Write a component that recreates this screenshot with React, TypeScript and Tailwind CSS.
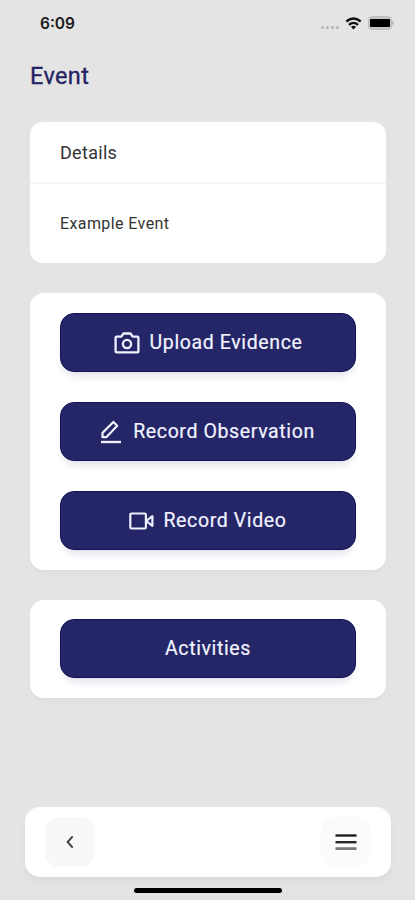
import React from "react";

function CameraIcon() {
  return (
    <svg width="26" height="22" viewBox="0 0 26 22" fill="none" stroke="#eef0ff" strokeWidth="2.3" strokeLinejoin="round">
      <path d="M2.6 4.6H7.3L9.5 1.5H16.5L18.7 4.6H23.4Q24.4 4.6 24.4 5.6V19.4Q24.4 20.4 23.4 20.4H2.6Q1.6 20.4 1.6 19.4V5.6Q1.6 4.6 2.6 4.6Z" />
      <circle cx="13" cy="12" r="4.1" />
    </svg>
  );
}

function EditIcon() {
  return (
    <svg width="20" height="24" viewBox="0 0 20 24" fill="none" stroke="#eef0ff" strokeWidth="2.2">
      <path d="M1.5 17.2V12.9L12.4 2L16.2 5.8L5.3 17.2Z" strokeLinejoin="round" />
      <path d="M0 22H20" strokeWidth="2.4" />
    </svg>
  );
}

function VideoIcon() {
  return (
    <svg width="25" height="18" viewBox="0 0 25 18" fill="none" stroke="#eef0ff" strokeWidth="2.2" strokeLinejoin="round">
      <rect x="1.3" y="1.5" width="15.6" height="15" rx="1.2" />
      <path d="M17.2 9L23.4 4.2V13.8Z" />
    </svg>
  );
}

function ActionButton({ icon, label, gap = "gap-[10px]" }: { icon?: React.ReactNode; label: string; gap?: string }) {
  return (
    <button className={`flex h-[59px] w-[296px] shrink-0 items-center justify-center rounded-[14px] border border-[#15115a] bg-[#242667] text-[19.5px] leading-none text-[#f2f3ff] shadow-[0_7px_9px_-4px_rgba(36,38,103,0.16)] ${gap}`}>
      {icon}
      <span className="whitespace-nowrap pt-px tracking-[0.62px] [-webkit-text-stroke:0.2px_#f2f3ff]">{label}</span>
    </button>
  );
}

export default function App() {
  return (
    <main className="flex h-[900px] w-[415px] flex-col overflow-hidden bg-[#e4e4e4] font-['Roboto',sans-serif]">
      <header className="flex h-[46px] shrink-0 items-center justify-between pr-[20px] pl-[40px]">
        <span className="pt-[1px] font-['Inter',sans-serif] text-[15.5px] font-semibold text-[#1b1b1b]">6:09</span>
        <div className="flex items-center">
          <div className="mt-[8px] mr-[6px] flex gap-[2px]">
            {[0, 1, 2, 3].map((n) => (
              <i key={n} className="h-[3px] w-[3px] rounded-full bg-[#b4b4b4]" />
            ))}
          </div>
          <svg width="17" height="13" viewBox="0 0 16 13" fill="none" stroke="#111" strokeWidth="2.3">
            <path d="M.8 4.5Q8-1.4 15.2 4.5" />
            <path d="M3.4 7.8Q8 4 12.6 7.8" />
            <path d="M5.4 9.7Q8 8 10.6 9.7L8 12.6Z" fill="#111" stroke="none" />
          </svg>
          <svg className="ml-[6px]" width="27" height="14" viewBox="0 0 27 14">
            <rect x=".7" y=".7" width="22.6" height="12.6" rx="3" fill="#c9c9c9" stroke="#b5b5b5" />
            <rect x="2" y="3" width="20" height="8" rx="1" fill="#000" />
            <path d="M24.5 4.5Q26.5 7 24.5 9.5Z" fill="#999" />
          </svg>
        </div>
      </header>
      <h1 className="mt-[14px] ml-[30px] h-[32px] shrink-0 text-[23.5px] leading-[32px] font-normal tracking-[0.35px] text-[#242363] [-webkit-text-stroke:0.3px_#242363]">Event</h1>

      <section className="mx-[30px] mt-[30px] h-[141px] w-[356px] shrink-0 rounded-[13px] bg-white text-[#333]">
        <h2 className="flex h-[62px] items-center border-b-2 border-[#f6f6f6] px-[30px] text-[18px] tracking-[0.3px]">Details</h2>
        <p className="flex h-[79px] items-center px-[30px] text-[16px] tracking-[0.4px]">Example Event</p>
      </section>

      <section className="mx-[30px] mt-[30px] flex h-[277px] w-[356px] shrink-0 flex-col gap-[30px] rounded-[14px] bg-white px-[30px] pt-[20px] shadow-[0_5px_10px_-5px_rgba(0,0,0,0.07)]">
        <ActionButton icon={<CameraIcon />} label="Upload Evidence" />
        <ActionButton icon={<EditIcon />} label="Record Observation" gap="gap-[12px]" />
        <ActionButton icon={<VideoIcon />} label="Record Video" gap="gap-[9px]" />
      </section>

      <section className="mx-[30px] mt-[30px] flex h-[98px] w-[356px] shrink-0 rounded-[14px] bg-white px-[30px] pt-[19px] shadow-[0_5px_10px_-5px_rgba(0,0,0,0.07)]">
        <ActionButton label="Activities" />
      </section>

      <nav className="mx-[25px] mt-auto flex h-[70px] w-[366px] shrink-0 items-center justify-between rounded-[15px] bg-white px-[20px] shadow-[0_5px_10px_-3px_rgba(0,0,0,0.08)]">
        <button aria-label="Back" className="flex h-[50px] w-[50px] items-center justify-center rounded-[14px] bg-[#f8f8f8]">
          <svg width="8" height="14" viewBox="0 0 8 14" fill="none" stroke="#444" strokeWidth="2">
            <path d="M6.7 1.3L1.6 7L6.7 12.7" />
          </svg>
        </button>
        <button aria-label="Menu" className="flex h-[50px] w-[50px] items-center justify-center rounded-[14px] bg-[#fbfbfb]">
          <svg width="22" height="18" viewBox="0 0 22 18">
            <path d="M.5 2.5H21.5" stroke="#151515" strokeWidth="2.3" />
            <path d="M.5 9.2H21.5" stroke="#222" strokeWidth="2.3" />
            <path d="M.5 15.6H21.5" stroke="#777" strokeWidth="2.7" />
          </svg>
        </button>
      </nav>
      <div className="mx-auto mt-[11px] mb-[7px] h-[5px] w-[148px] shrink-0 rounded-full bg-black" />
    </main>
  );
}
